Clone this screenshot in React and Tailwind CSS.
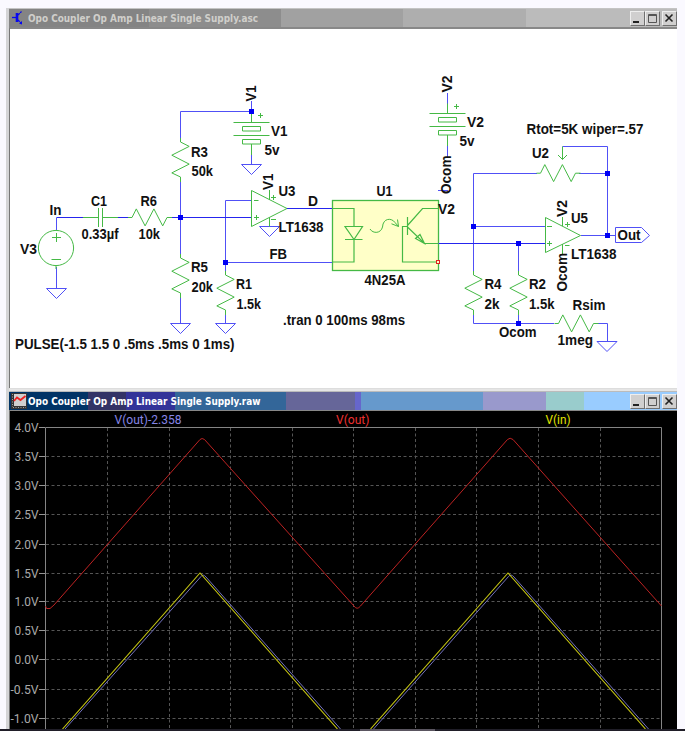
const INK = '#111111';
const WIRE = '#5050f6';
const PART = '#45b945';

// Horizontal schematic label, fitted between x and x + w
function T({ x, y, w, children, size = 14.3 }) {
  return (
    <text x={x} y={y} fontSize={size} textLength={w} lengthAdjust="spacingAndGlyphs" fill={INK}>
      {children}
    </text>
  );
}

// Net label turned a quarter to the left, starting at its bottom end
function V({ x, y, w, children }) {
  return (
    <text
      transform={`translate(${x} ${y}) rotate(-90)`}
      fontSize="14.3"
      textLength={w}
      lengthAdjust="spacingAndGlyphs"
      fill={INK}
    >
      {children}
    </text>
  );
}

const Dot = ({ x, y }) => <rect x={x - 2.5} y={y - 2.5} width="5" height="5" fill="#0000f5" />;
const Ground = ({ x, y }) => <path d={`M${x - 10} ${y}h20l-10 10z`} stroke={WIRE} />;
const Plus = ({ x, y, r = 2.5 }) => <path d={`M${x - r} ${y}h${2 * r}M${x} ${y - r}v${2 * r}`} />;
const ResV = ({ x, y }) => (
  <path d={`M${x} ${y}v4l8.7 4.4l-17.4 8.8l17.4 8.9l-17.4 8.8l8.7 4.1v5`} />
);
const ResH = ({ x, y }) => (
  <path d={`M${x} ${y}h4l4.3 -8.6l8.8 17l8.8 -17l8.8 17l4.3 -8.4h5`} />
);
const Battery = ({ x, y }) => (
  <path
    d={`M${x} ${y - 10}v10M${x - 18} ${y}h36M${x - 9} ${y + 4}h18v4.5h-18zM${x - 18} ${y + 13}h36M${x - 9} ${y + 17}h18v4.5h-18zM${x} ${y + 21.5}v11`}
  />
);

function Schematic() {
  return (
    <svg
      className="block h-[359px] w-[667px] bg-white"
      viewBox="10 29 667 359"
      fill="none"
      strokeWidth="1"
      fontFamily="'Liberation Sans', Arial, sans-serif"
      fontWeight="bold"
    >
      <rect x="332.5" y="200.5" width="106" height="70" fill="#ffffc8" stroke={PART} strokeWidth="1.3" />

      <g stroke={WIRE}>
        <path d="M56.5 230V217.5H83M118 217.5H131M171 217.5H252M56.5 267V288" />
        <path d="M180.500 138V111.500H251.500V101M251.500 155V164M180.500 181V254M180.500 296V324" />
        <path d="M252 200.5H225.5V271M225.5 315V324M225.5 262.5H332M287 208.5H332" />
        <path d="M447.5 93V104M447.5 146V157M438 190.5H448" />
        <path d="M537 173.5H473.5V271M579 173.5H607.5M562.5 146.5H607.5V235.5M581 235.5H615" />
        <path d="M473.5 226.5H545M438.5 243.5H545M518.5 243.5V271M473.5 315V323.5H554M518.5 315V323.5" />
        <path d="M598 323.5H607.5V341M615.5 227.5H641.5L649.5 235.5L641.5 242.5H615.5Z" />
      </g>
      <path
        d="M57 217.5H83M118 217.5H131M172 217.5H252M287 208.5H332M439 243.5H545"
        stroke="#2525ee"
      />
      <Ground x={56.5} y={288.5} />
      <Ground x={251.5} y={164.5} />
      <Ground x={180.5} y={323.5} />
      <Ground x={225.5} y={323.5} />
      <Ground x={269.5} y={226.5} />
      <Ground x={607} y={341.5} />

      <g stroke={PART}>
        <circle cx="56" cy="248" r="17.6" />
        <path d="M56 265V269M51.5 259.5H61" />
        <Plus x={56.5} y={237.5} r={4.5} />
        <path d="M83 217.5H98.5M98.5 208V227M102.5 208V227M102.5 217.5H118" />
        <ResH x={128} y={217.5} />
        <ResV x={180.5} y={138} />
        <ResV x={180.5} y={254} />
        <ResV x={225.5} y={271} />
        <ResV x={473.5} y={271} />
        <ResV x={518.5} y={271} />
        <ResH x={554.5} y={323.5} />
        <ResH x={536.5} y={173.2} />
        <Battery x={251.5} y={122.5} />
        <Battery x={447.5} y={113.5} />
        <Plus x={260.5} y={115.5} />
        <Plus x={456.5} y={106.5} />

        <path d="M251.5 190.5V226.5L287 208.5ZM254 200.5H258.5M269.5 190V200M271 219.5H276M269.5 217.5V226.5" />
        <Plus x={256.5} y={217.5} />
        <Plus x={273.5} y={197.5} />
        <path d="M545.5 217.5V252.5L580.5 235.5ZM547 226.5H552M562.5 217V226M565 245.5H569.5M562.5 244V254" />
        <Plus x={549.5} y={243.5} />
        <Plus x={567.5} y={224.5} />

        <path d="M332 208.5H354V226M345 226.5H362.5L354 239.5ZM345 239.5H362.5M354 239V262H332" strokeWidth="1.2" />
        <path d="M370 229C373 234 381 233.5 382.5 227C383 218 391.5 217.5 395 222.5L398.5 226.5M398.5 226.5L397.5 219.5M398.5 226.5L391.5 223.8" />
        <path d="M407.5 217V235M407.5 226.5H402.5V262H438M407.5 225.5L422.5 208.5H438M407.5 227L424.5 243.5H438M415.5 238.5L420 234.5L424.5 243.5Z" strokeWidth="1.2" />
        <path d="M562.5 146.5V159.5M558 155L562.5 159.5L567 155" />
      </g>
      <rect x="436.5" y="260.5" width="3" height="3" fill="#ffffc8" stroke="#e02020" />

      <Dot x={180.5} y={217.5} />
      <Dot x={251.5} y={111.5} />
      <Dot x={225.5} y={262.5} />
      <Dot x={607.5} y={173.5} />
      <Dot x={607.5} y={235.5} />
      <Dot x={473.5} y={226.5} />
      <Dot x={518.5} y={243.5} />
      <Dot x={518.5} y={323.5} />

      <T x={49.5} y={214.5} w={12}>In</T>
      <T x={91} y={206} w={16}>C1</T>
      <T x={140.5} y={206} w={16.5}>R6</T>
      <T x={81.5} y={238.5} w={37}>0.33µf</T>
      <T x={138.5} y={238.5} w={21.5}>10k</T>
      <T x={20} y={253.5} w={17}>V3</T>
      <T x={15} y={348.5} w={219.5}>PULSE(-1.5 1.5 0 .5ms .5ms 0 1ms)</T>
      <T x={191} y={156.5} w={17}>R3</T>
      <T x={191.5} y={176} w={21.5}>50k</T>
      <T x={271} y={136} w={16.5}>V1</T>
      <T x={264.5} y={155} w={15}>5v</T>
      <T x={278.5} y={195.5} w={17}>U3</T>
      <T x={308} y={206} w={10}>D</T>
      <T x={278.5} y={231.5} w={45}>LT1638</T>
      <T x={269.5} y={259} w={17.5}>FB</T>
      <T x={191} y={271.5} w={17}>R5</T>
      <T x={191.5} y={291.5} w={21.5}>20k</T>
      <T x={236} y={289} w={16}>R1</T>
      <T x={236.5} y={309} w={24.5}>1.5k</T>
      <T x={283} y={325} w={122}>.tran 0 100ms 98ms</T>
      <T x={376.5} y={195.5} w={16}>U1</T>
      <T x={364.5} y={284.5} w={41}>4N25A</T>
      <T x={438} y={214} w={17}>V2</T>
      <T x={467} y={127} w={17}>V2</T>
      <T x={459.5} y={146} w={15}>5v</T>
      <T x={526.5} y={133.5} w={117}>Rtot=5K wiper=.57</T>
      <T x={532} y={157.5} w={17}>U2</T>
      <T x={571} y={222.5} w={17}>U5</T>
      <T x={571} y={258.5} w={45.5}>LT1638</T>
      <T x={617.5} y={240} w={23}>Out</T>
      <T x={484.5} y={289} w={17}>R4</T>
      <T x={484.5} y={309} w={15}>2k</T>
      <T x={529} y={289} w={17}>R2</T>
      <T x={529} y={309} w={25.5}>1.5k</T>
      <T x={572.5} y={309.5} w={33}>Rsim</T>
      <T x={557.5} y={345} w={35.5}>1meg</T>
      <T x={499} y={336.5} w={37.5}>Ocom</T>
      <V x={255.5} y={101.5} w={16}>V1</V>
      <V x={273} y={190} w={16.5}>V1</V>
      <V x={451.5} y={92.5} w={17}>V2</V>
      <V x={451} y={194} w={38.5}>Ocom</V>
      <V x={566.5} y={217} w={17}>V2</V>
      <V x={566.5} y={291.5} w={38.5}>Ocom</V>
    </svg>
  );
}

const gridX = [107.5, 169.5, 230.5, 292.5, 353.5, 415.5, 476.5, 538.5, 600.5];
const levels = [
  ['4.0V', 427.5], ['3.5V', 456.5], ['3.0V', 485.5], ['2.5V', 514.5], ['2.0V', 544.5], ['1.5V', 573.5],
  ['1.0V', 601.5], ['0.5V', 630.5], ['0.0V', 659.5], ['-0.5V', 689.5], ['-1.0V', 718.5],
];

function Plot() {
  return (
    <svg
      className="block h-[318px] w-[667px] bg-black"
      viewBox="10 411 667 318"
      fill="none"
      fontFamily="Roboto, 'Liberation Sans', sans-serif"
    >
      <g stroke="#555555" strokeDasharray="3 2.5">
        {gridX.map((x) => <path key={x} d={`M${x} 428V729`} />)}
        {levels.slice(1).map(([n, y]) => <path key={n} d={`M46 ${y}H661`} />)}
      </g>
      <path d="M45.5 729V427.5H661.5V729" stroke="#858585" />
      {levels.map(([n, y]) => (
        <g key={n}>
          <path d={`M39 ${y}H45`} stroke="#959595" />
          <text
            x="38.5" y={y + 4.3} textAnchor="end" fontSize="12.6" fill="#aaaaaa"
            textLength={n.length === 5 ? 28 : 24} lengthAdjust="spacingAndGlyphs"
          >
            {n}
          </text>
        </g>
      ))}
      <path d="M45.5 606L46.5 608.5H50L54 605L200 439.5Q202 437.5 204.5 439.5L354 606Q357 610.5 360.5 606L507.5 439.5Q510 437 513 439.5L661.5 606" stroke="#bd2222" />
      <path d="M65 729L201 576.5Q203 573.5 206 577L340.5 729M373.5 729L508.5 576.5Q511 573.5 514 577L648.5 729" stroke="#7171bd" />
      <path d="M62.5 729L200 573L337.5 729M370.5 729L508 573L645.5 729" stroke="#c8c812" strokeWidth="1.1" />
      <text x="114.5" y="423.5" fontSize="12.6" fill="#8585e6" textLength="67" lengthAdjust="spacingAndGlyphs">V(out)-2.358</text>
      <text x="336" y="423.5" fontSize="12.6" fill="#ed3030" textLength="33.5" lengthAdjust="spacingAndGlyphs">V(out)</text>
      <text x="545.5" y="423.5" fontSize="12.6" fill="#e2e200" textLength="25" lengthAdjust="spacingAndGlyphs">V(in)</text>
    </svg>
  );
}

function WindowButton({ kind }) {
  return (
    <span className="flex h-[15px] w-[15px] items-center justify-center border border-t-[#eeeeee] border-r-[#707070] border-b-[#707070] border-l-[#eeeeee] bg-[#d0cfcf]">
      <svg className="block h-[13px] w-[13px]" viewBox="0 0 13 13" fill="none" stroke="#222222">
        {kind === 'min' && <path d="M2 10H8" strokeWidth="2" />}
        {kind === 'max' && <path d="M2.5 2.5H10.5V10.5H2.5ZM2 3.5H11" stroke="#555555" />}
        {kind === 'close' && <path d="M2.5 2.5L9.5 9.5M9.5 2.5L2.5 9.5" strokeWidth="1.6" />}
      </svg>
    </span>
  );
}

function TitleBar({ bg, icon, title, color }) {
  return (
    <div className={`flex h-[18px] w-[668px] items-center ${bg}`}>
      <span className="ml-[2px] flex w-[17px] shrink-0">{icon}</span>
      <svg className="block h-[18px] w-[240px] overflow-visible" viewBox="0 0 240 18">
        <text
          x="0" y="13" fontSize="11" fontWeight="bold" fill={color} className="[font-stretch:condensed]"
          fontFamily="'DejaVu Sans Condensed', 'DejaVu Sans', 'Noto Sans', sans-serif"
          textLength={title.endsWith('.asc') ? 230 : 232.5} lengthAdjust="spacingAndGlyphs"
        >
          {title}
        </text>
      </svg>
      <div className="ml-auto flex">
        <WindowButton kind="min" />
        <WindowButton kind="max" />
        <span className="ml-[2px] flex"><WindowButton kind="close" /></span>
      </div>
    </div>
  );
}

const SchematicIcon = (
  <svg className="block h-[16px] w-[16px]" viewBox="0 0 16 16" fill="none" stroke="#0808ee">
    <path d="M1 7.5H6" strokeWidth="1.3" />
    <path d="M6 3V12" strokeWidth="2.6" />
    <path d="M7 5L10.5 1.5M7 10L10.5 13.5" strokeWidth="1.2" strokeDasharray="2.5 0.6" />
    <path d="M8 13.5L11 11V14.5Z" fill="#0808ee" stroke="none" />
  </svg>
);

const PlotIcon = (
  <svg className="block h-[16px] w-[16px]" viewBox="0 0 16 16" fill="none">
    <rect width="16" height="16" fill="#343434" />
    <rect x="3" y="1" width="12" height="12" fill="#cfcfcf" />
    <path d="M1.5 1V14M2 14.5H15" stroke="#a2a2a2" strokeDasharray="1 1.5" />
    <path d="M3 8L6 4.5L9.5 7L14.5 3" stroke="#ee2020" strokeWidth="1.8" />
  </svg>
);

export default function App() {
  return (
    <div className="flex h-[731px] w-[685px] flex-col overflow-hidden bg-[#faf9ff] pt-[8px]">
      <div className="ml-[6px] w-[671px] border-l-[3px] border-[#d4d4d6]">
        <div className="h-px bg-[#c4c4c4]" />
        <TitleBar
          bg="bg-[linear-gradient(90deg,#848484_0_140px,#8d8d8d_140px_272px,#a1a1a1_272px_394px,#aeaeae_394px_517px,#bbbbbb_517px)]"
          icon={SchematicIcon}
          title="Opo Coupler Op Amp Linear Single Supply.asc"
          color="#d0cfcb"
        />
        <div className="flex flex-col border-t-2 border-t-[#888888] border-l border-l-[#777777]">
          <Schematic />
        </div>
        <div className="h-[4px] border-t border-t-[#dddddd] border-b border-b-[#bbbbbb] bg-[#e5e5e5]" />
        <TitleBar
          bg="bg-[linear-gradient(90deg,#003366_0_79px,#333366_79px_117px,#333399_117px_166px,#336699_166px_277px,#666699_277px_346px,#6666cc_346px_352px,#6699cc_352px_474px,#9999cc_474px_537px,#99cccc_537px_575px,#99ccff_575px)]"
          icon={PlotIcon}
          title="Opo Coupler Op Amp Linear Single Supply.raw"
          color="#ffffff"
        />
        <div className="flex flex-col border-t border-t-[#888888] border-l border-l-[#777777]">
          <Plot />
        </div>
      </div>
      <div className="h-[2px] w-full shrink-0 bg-[linear-gradient(90deg,#201e28_0_360px,#5a5560_360px_435px,#201e28_435px)]" />
    </div>
  );
}
